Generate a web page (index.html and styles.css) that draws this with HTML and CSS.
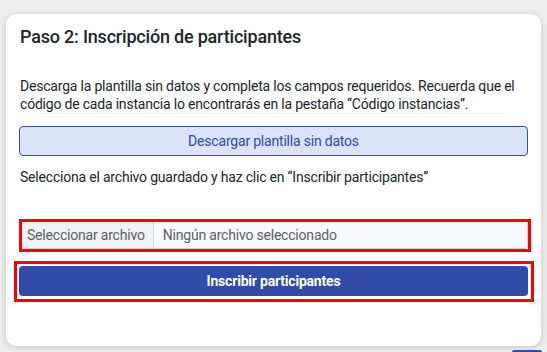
FILE: index.html
```html
<!DOCTYPE html>
<html lang="es">

<head>
    <meta charset="UTF-8">
    <meta name="viewport" content="width=device-width, initial-scale=1.0">
    <title>Inscripción de participantes</title>

    <link rel="stylesheet" href="styles.css">
</head>

<body>

    <main class="card">
        <h2 class="card-title">Paso 2: Inscripción de participantes</h2>

        <p class="card-text intro">Descarga la plantilla sin datos y completa los campos requeridos. Recuerda que el código de cada instancia lo encontrarás en la pestaña “Código instancias”.</p>

        <button class="btn-outline">Descargar plantilla sin datos</button>

        <p class="card-text hint">Selecciona el archivo guardado y haz clic en “Inscribir participantes”</p>

        <div class="mark mark-file">
            <label class="file-input">
                <span class="file-btn">Seleccionar archivo</span>
                <span class="file-name">Ningún archivo seleccionado</span>
            </label>
        </div>

        <div class="mark mark-submit">
            <button class="btn-primary">Inscribir participantes</button>
        </div>
    </main>

    <div class="next-tab"></div>

</body>

</html>
```

FILE: styles.css
```css
* {
    margin: 0;
    padding: 0;
    box-sizing: border-box;
}

body {
    background-color: #eeeeef;
    font-family: Roboto, "Noto Sans", sans-serif;
    letter-spacing: -0.2px;
    color: #212529;
    padding: 14px 0 0 6px;
    display: flex;
    flex-direction: column;
    height: 100vh;
    overflow: hidden;
}

.card {
    width: 535px;
    height: 332px;
    flex-shrink: 0;
    background-color: #fff;
    border-radius: 10px;
    box-shadow: 0px 1px 6px rgba(0, 0, 0, 0.18);
    padding: 12px 13px 0 14px;
    display: flex;
    flex-direction: column;
}

.card-title {
    font-size: 18px;
    font-weight: 500;
    line-height: 22px;
    margin-bottom: 29px;
}

.card-text {
    font-size: 14px;
    line-height: 18px;
}

.intro {
    margin-bottom: 13px;
}

.btn-outline {
    font-family: inherit;
    font-size: 14px;
    letter-spacing: inherit;
    height: 30px;
    margin-left: -1px;
    background-color: #dce3f8;
    color: #3048a6;
    border: 1px solid #3450ae;
    border-radius: 4px;
}

.hint {
    margin-top: 12px;
    margin-bottom: 33px;
}

.mark {
    border: 3px solid #ff0000;
}

.mark-file {
    margin: 0 -3px 0 -1px;
}

.file-input {
    display: flex;
    height: 27px;
    background-color: #f8f9fa;
    border-right: 1px solid #ced4da;
    border-bottom: 1px solid #ced4da;
    border-radius: 0 0 3px 0;
    font-size: 14px;
    color: #5a6068;
    line-height: 26px;
}

.file-btn {
    padding: 0 8px 0 5px;
    background-color: #f1f2f4;
    border-right: 1px solid #ced4da;
}

.file-name {
    padding-left: 9px;
}

.mark-submit {
    margin: 9px -6px 0 -6px;
    padding: 2px 3px 3px 2px;
}

.btn-primary {
    width: 100%;
    height: 30px;
    font-family: inherit;
    font-size: 14px;
    font-weight: 700;
    letter-spacing: inherit;
    color: #fff;
    background-color: #304ca8;
    border: none;
    border-radius: 4px;
}

.next-tab {
    align-self: flex-end;
    width: 30px;
    height: 8px;
    margin: 4px 5px 0 0;
    background-color: #304ca8;
    border-radius: 4px 4px 0 0;
}
```
